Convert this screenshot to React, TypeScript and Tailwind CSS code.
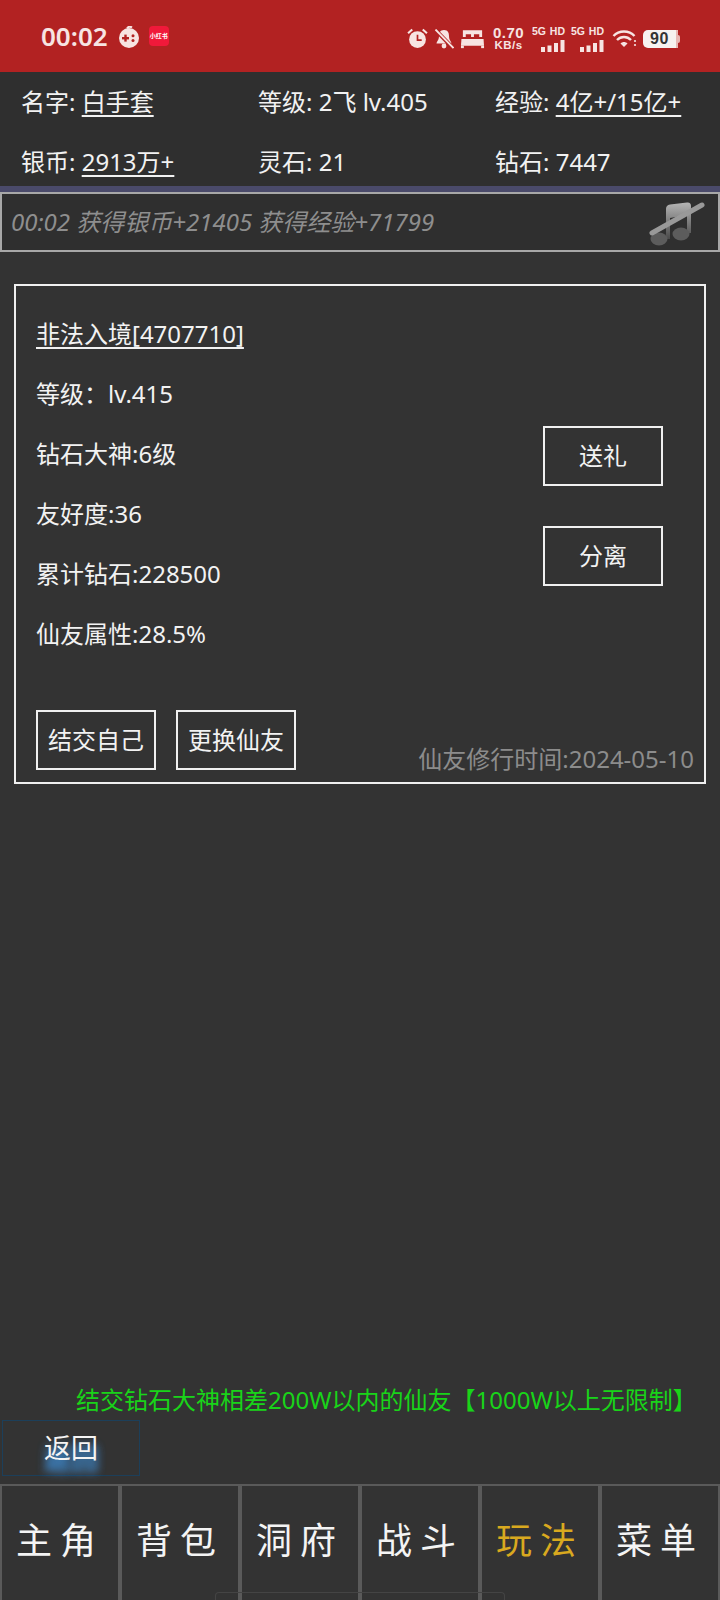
const font = { fontFamily: '"Noto Sans", "Noto Sans CJK SC", sans-serif' };
const statusFont = { fontFamily: '"Liberation Sans", sans-serif' };

function Stat({ label, value, link }: { label: string; value: string; link?: boolean }) {
  return (
    <div className="whitespace-nowrap text-[24px] leading-[32px] text-[#f2f2f2]">
      {label}: <span className={link ? "underline underline-offset-[4px]" : ""}>{value}</span>
    </div>
  );
}

function OutlineButton({ children }: { children: string }) {
  return (
    <div className="flex h-[60px] w-[120px] items-center justify-center border-2 border-[#f0f0f0] text-[24px] text-[#f2f2f2]">
      {children}
    </div>
  );
}

function GameIcon() {
  return (
    <svg width="22" height="22" viewBox="0 0 22 22" className="mt-[2px]">
      <circle cx="11" cy="12" r="10" fill="#f7e4e2" />
      <path d="M9 2.5 Q11 -0.5 14 1.5" stroke="#f7e4e2" strokeWidth="2" fill="none" />
      <rect x="4" y="11" width="7" height="2.4" fill="#b22222" />
      <rect x="6.3" y="8.6" width="2.4" height="7" fill="#b22222" />
      <circle cx="15" cy="9.8" r="1.5" fill="#b22222" />
      <circle cx="15" cy="14.4" r="1.5" fill="#b22222" />
    </svg>
  );
}

function SignalBars() {
  return (
    <svg width="24" height="12" viewBox="0 0 24 12">
      <rect x="0" y="7" width="4" height="5" fill="#f7e4e2" />
      <rect x="6.5" y="5.5" width="4" height="6.5" fill="#f7e4e2" />
      <rect x="13" y="3" width="4" height="9" fill="#f7e4e2" />
      <rect x="19.5" y="0" width="4" height="12" fill="#f7e4e2" />
    </svg>
  );
}

function SimSignal() {
  return (
    <div className="flex w-[33px] flex-col items-center">
      <div className="flex w-full justify-between text-[10.5px] font-bold leading-[12px] text-[#f7e4e2]" style={statusFont}>
        <span>5G</span>
        <span>HD</span>
      </div>
      <div className="mt-[3px] ml-[8px]">
        <SignalBars />
      </div>
    </div>
  );
}

function StatusIcons() {
  return (
    <div className="mt-[5px] flex items-center">
      <svg width="21" height="21" viewBox="0 0 20 20">
        <circle cx="10" cy="11" r="8" fill="#f7e4e2" />
        <path d="M10 6.5V11.5H14" stroke="#b22222" strokeWidth="1.6" fill="none" />
        <path d="M1 5 L5 1.5 M19 5 L15 1.5" stroke="#f7e4e2" strokeWidth="2" />
      </svg>
      <svg width="20" height="20" viewBox="0 0 20 20" className="ml-[6px]">
        <path d="M10 1 C6 1 5 4 5 7 C5 11 3 12 2.5 14.5 H17.5 C17 12 15 11 15 7 C15 4 14 1 10 1Z" fill="#f7e4e2" />
        <circle cx="10" cy="17" r="2.4" fill="#f7e4e2" />
        <path d="M1 0.5 L19 19" stroke="#b22222" strokeWidth="4" />
        <path d="M1.5 0.5 L19.5 19" stroke="#f7e4e2" strokeWidth="1.8" />
      </svg>
      <svg width="25" height="20" viewBox="0 0 26 20" className="ml-[6px]">
        <path d="M3 1 H23 V8 H20 V5 H14.5 V8 H11.5 V5 H6 V8 H3Z" fill="#f7e4e2" />
        <path d="M1.5 10 H24.5 L25 17 H1Z" fill="#f7e4e2" />
        <rect x="1" y="17" width="3" height="2.5" fill="#f7e4e2" />
        <rect x="22" y="17" width="3" height="2.5" fill="#f7e4e2" />
      </svg>
      <div className="ml-[7px] flex w-[33px] flex-col items-center font-bold text-[#f7e4e2]" style={statusFont}>
        <span className="text-[15px] leading-[14px] tracking-[0.4px]">0.70</span>
        <span className="text-[11.5px] leading-[11px] tracking-[0.5px]">KB/s</span>
      </div>
      <div className="ml-[7px] flex gap-[6px]">
        <SimSignal />
        <SimSignal />
      </div>
      <svg width="26" height="20" viewBox="0 0 26 20" className="ml-[8px]">
        <path d="M1.5 7 C7 1 17 1 22.5 7" stroke="#f7e4e2" strokeWidth="2.4" fill="none" />
        <path d="M5 11 C9 7 15 7 19 11" stroke="#f7e4e2" strokeWidth="2.4" fill="none" />
        <path d="M8.5 14.5 C10.5 12.5 13.5 12.5 15.5 14.5 L12 18Z" fill="#f7e4e2" />
        <circle cx="23" cy="12" r="1.1" fill="#f7e4e2" />
        <circle cx="23" cy="16" r="1.1" fill="#f7e4e2" />
      </svg>
      <div className="ml-[5px] flex items-center">
        <div className="flex h-[18px] w-[33px] items-center justify-center rounded-l-[5px] bg-[#f7f2f0] text-[16px] font-bold tracking-[0.5px] text-[#333]" style={statusFont}>
          90
        </div>
        <div className="h-[18px] w-[2px] bg-[#e9b8b5]" />
        <div className="h-[8px] w-[2px] rounded-r-[2px] bg-[#e9b8b5]" />
      </div>
    </div>
  );
}

function MusicOff() {
  return (
    <svg width="56" height="46" viewBox="0 0 56 46" className="mt-[3px]">
      <defs>
        <linearGradient id="note" x1="0" y1="0" x2="0" y2="1">
          <stop offset="0" stopColor="#b5b5b5" />
          <stop offset="1" stopColor="#4a4a4a" />
        </linearGradient>
      </defs>
      <path d="M17 8 Q17 4 21 3.5 L38 1.5 Q42 1 42 5 V32 H38 V14 L21 17 V38 H17Z" fill="url(#note)" />
      <ellipse cx="10" cy="38" rx="8.5" ry="6.5" fill="#5c5c5c" />
      <ellipse cx="32" cy="33" rx="8.5" ry="6.5" fill="#5c5c5c" />
      <path d="M3 32 L53 4" stroke="#999" strokeWidth="5" strokeLinecap="round" />
    </svg>
  );
}

function NavCell({ label, active }: { label: string; active?: boolean }) {
  return (
    <div
      className={`flex h-full w-[120px] items-start justify-center border-x-2 border-[#5a5a5a] pt-[31px] text-[36px] leading-[48px] tracking-[8px] ${
        active ? "text-[#d9a91f]" : "text-[#f4f4f4]"
      }`}
    >
      {label}
    </div>
  );
}

export default function App() {
  return (
    <div className="relative flex h-[1600px] w-[720px] flex-col overflow-hidden bg-[#333333]" style={font}>
      <div className="flex h-[72px] shrink-0 items-center justify-between bg-[#b22222] pr-[40px] pl-[41px]">
        <div className="flex items-center">
          <span className="text-[26px] font-semibold leading-none text-[#f7e4e2]">00:02</span>
          <div className="ml-[10px]">
            <GameIcon />
          </div>
          <div className="ml-[9px] flex h-[20px] w-[20px] items-center justify-center overflow-hidden rounded-[4px] bg-[#f0193a] text-[6px] font-bold text-white">
            小红书
          </div>
        </div>
        <StatusIcons />
      </div>

      <div className="grid h-[114px] shrink-0 grid-cols-[237px_237px_1fr] grid-rows-[60px_40px] items-start bg-[#2f2f2f] pt-[14px] pl-[21px]">
        <Stat label="名字" value="白手套" link />
        <Stat label="等级" value="2飞 lv.405" />
        <Stat label="经验" value="4亿+/15亿+" link />
        <Stat label="银币" value="2913万+" link />
        <Stat label="灵石" value="21" />
        <Stat label="钻石" value="7447" />
      </div>
      <div className="h-[6px] shrink-0 bg-[#4a4a6a]" />

      <div className="flex h-[60px] shrink-0 items-center justify-between border-2 border-[#a8a8a8] bg-[#2f2f2f] pr-[13px] pl-[9px]">
        <span className="text-[24px] italic text-[#8e8e8e]">00:02 获得银币+21405 获得经验+71799</span>
        <MusicOff />
      </div>

      <div className="mx-[14px] mt-[32px] flex h-[500px] flex-col justify-between border-2 border-[#f0f0f0] px-[20px] pt-[18px] pb-[12px]">
        <div className="flex justify-between">
          <div className="flex flex-col text-[24px] leading-[60px] text-[#f2f2f2]">
            <span className="underline underline-offset-[4px]">非法入境[4707710]</span>
            <span>等级：lv.415</span>
            <span>钻石大神:6级</span>
            <span>友好度:36</span>
            <span>累计钻石:228500</span>
            <span>仙友属性:28.5%</span>
          </div>
          <div className="mt-[122px] mr-[21px] flex flex-col gap-[40px]">
            <OutlineButton>送礼</OutlineButton>
            <OutlineButton>分离</OutlineButton>
          </div>
        </div>
        <div className="flex items-end justify-between">
          <div className="flex gap-[20px]">
            <OutlineButton>结交自己</OutlineButton>
            <OutlineButton>更换仙友</OutlineButton>
          </div>
          <span className="mr-[-10px] mb-[-5px] text-[24px] leading-[32px] text-[#8c8c8c]">仙友修行时间:2024-05-10</span>
        </div>
      </div>

      <div className="mt-auto shrink-0">
        <div className="pl-[76px] text-[24px] leading-[32px] text-[#19d419]">结交钻石大神相差200W以内的仙友【1000W以上无限制】</div>
        <div className="mt-[4px] ml-[2px] flex h-[56px] w-[138px] items-center justify-center border border-[#1c3f5a] text-[27px] text-[#f4f4f4] [text-shadow:0_10px_8px_#3f8fd8,0_12px_10px_#3f8fd8]">
          返回
        </div>
        <div className="mt-[8px] flex h-[116px] border-t-2 border-[#5a5a5a]">
          <NavCell label="主角" />
          <NavCell label="背包" />
          <NavCell label="洞府" />
          <NavCell label="战斗" />
          <NavCell label="玩法" active />
          <NavCell label="菜单" />
        </div>
      </div>

      <div className="absolute bottom-0 left-[215px] h-[8px] w-[290px] rounded-t-[4px] border border-b-0 border-[#444]" />
    </div>
  );
}
